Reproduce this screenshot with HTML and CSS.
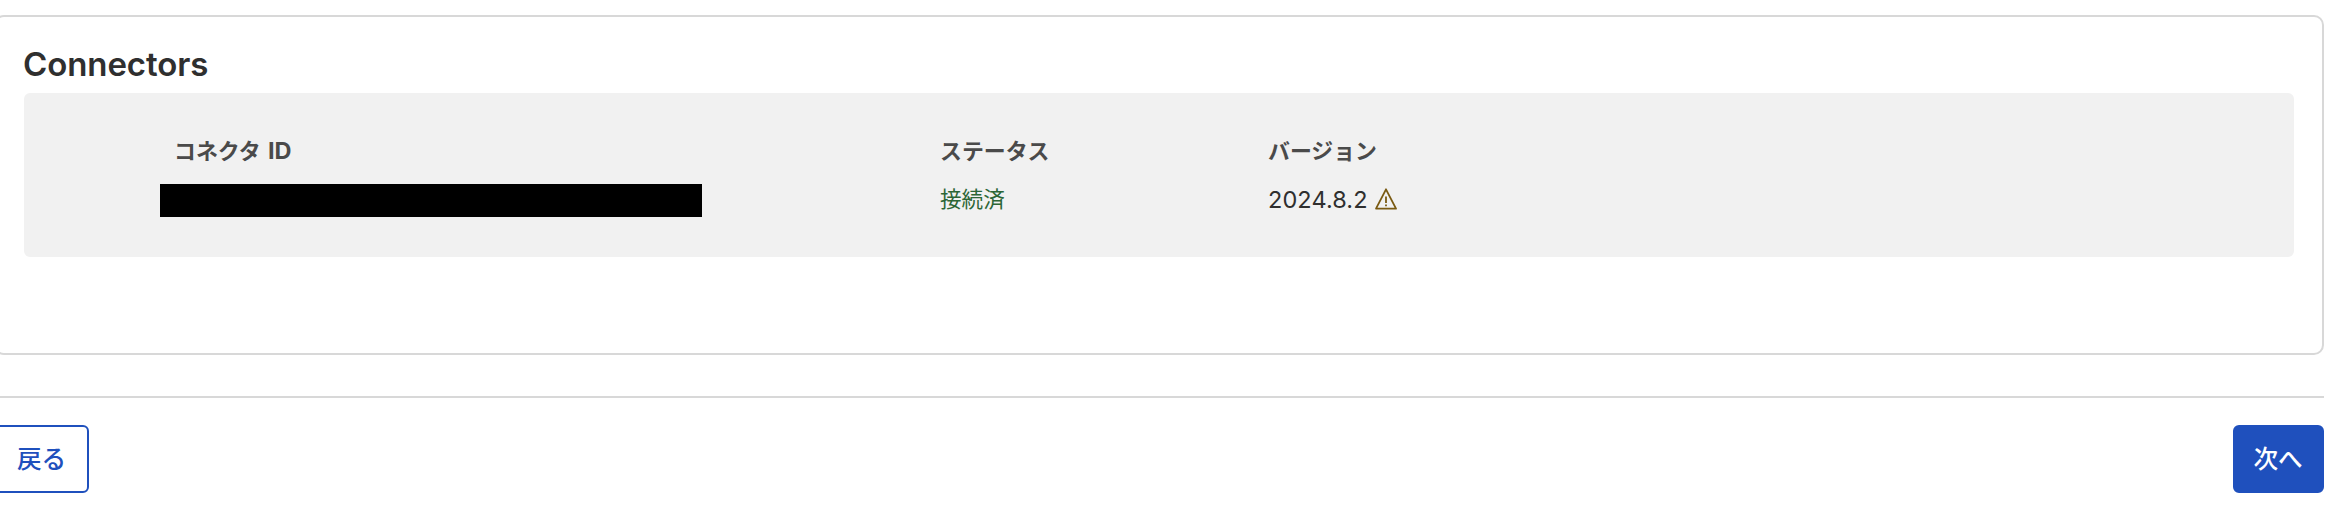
FILE: index.html
```
<!DOCTYPE html>
<html lang="ja">
<head>
<meta charset="utf-8">
<title>Connectors</title>
<link rel="stylesheet" href="styles.css">
</head>
<body>
<main class="page">
  <section class="card">
    <h2 class="card-title">Connectors</h2>
    <div class="panel">
      <div class="column column-id">
        <div class="label">コネクタ <span class="label-latin">ID</span></div>
        <div class="redacted"></div>
      </div>
      <div class="column column-status">
        <div class="label">ステータス</div>
        <div class="status">接続済</div>
      </div>
      <div class="column">
        <div class="label">バージョン</div>
        <div class="version">
          <span>2024.8.2</span>
          <svg class="warning" viewBox="0 0 22 22" fill="none" stroke="#7a5a12" stroke-width="1.8" stroke-linejoin="round"><path d="M11 1.3 21 20.6H1Z"/><path d="M11 8.5V15M11 16.6V18.2"/></svg>
        </div>
      </div>
    </div>
  </section>
  <footer class="actions">
    <button class="button button-back">戻る</button>
    <button class="button button-next">次へ</button>
  </footer>
</main>
</body>
</html>
```
FILE: styles.css
```
* { box-sizing: border-box; }
body {
  margin: 0;
  background: #fff;
  color: #2f2f2f;
  font-family: Inter, "Noto Sans CJK JP", sans-serif;
  overflow: hidden;
}
.page { margin: 15px 16px 0 -6px; }
.card {
  height: 340px;
  padding: 26px 28px 0;
  border: 2px solid #d8d8d8;
  border-radius: 10px;
}
.card-title {
  margin: 0 0 0 -1px;
  height: 50px;
  font-size: 33px;
  line-height: 42px;
  font-weight: 600;
  letter-spacing: -0.1px;
}
.panel {
  display: flex;
  height: 164px;
  padding: 42px 0 0 136px;
  border-radius: 6px;
  background: #f1f1f1;
}
.column-id { width: 780px; }
.column-id .label { padding-left: 14px; }
.column-status { width: 328px; }
.label {
  height: 32px;
  line-height: 33px;
  font-size: 21.9px;
  font-weight: 700;
  color: #4a4a4a;
  white-space: nowrap;
}
.label-latin { margin-left: 2px; font-size: 23.5px; font-weight: 700; line-height: 1; }
.redacted { width: 542px; height: 33px; margin-top: 17px; background: #000; }
.status {
  margin-top: 16px;
  line-height: 32px;
  font-size: 21.6px;
  color: #2c6636;
}
.version {
  display: flex;
  align-items: center;
  gap: 7px;
  margin-top: 16px;
  height: 32px;
  font-size: 23.5px;
  letter-spacing: 0.1px;
}
.warning { width: 22px; height: 22px; }
.actions {
  display: flex;
  justify-content: space-between;
  margin-top: 41px;
  padding-top: 27px;
  border-top: 2px solid #d8d8d8;
}
.button {
  height: 68px;
  border: 2px solid #1f50bd;
  border-radius: 6px;
  font: 500 24.6px/1 Inter, "Noto Sans CJK JP", sans-serif;
  white-space: nowrap;
}
.button-back { width: 95px; padding: 0 20px 0 20px; background: #fff; color: #1f50bd; }
.button-next { width: 91px; padding: 0 1px 0 0; background: #1f50bd; color: #fff; }
```
